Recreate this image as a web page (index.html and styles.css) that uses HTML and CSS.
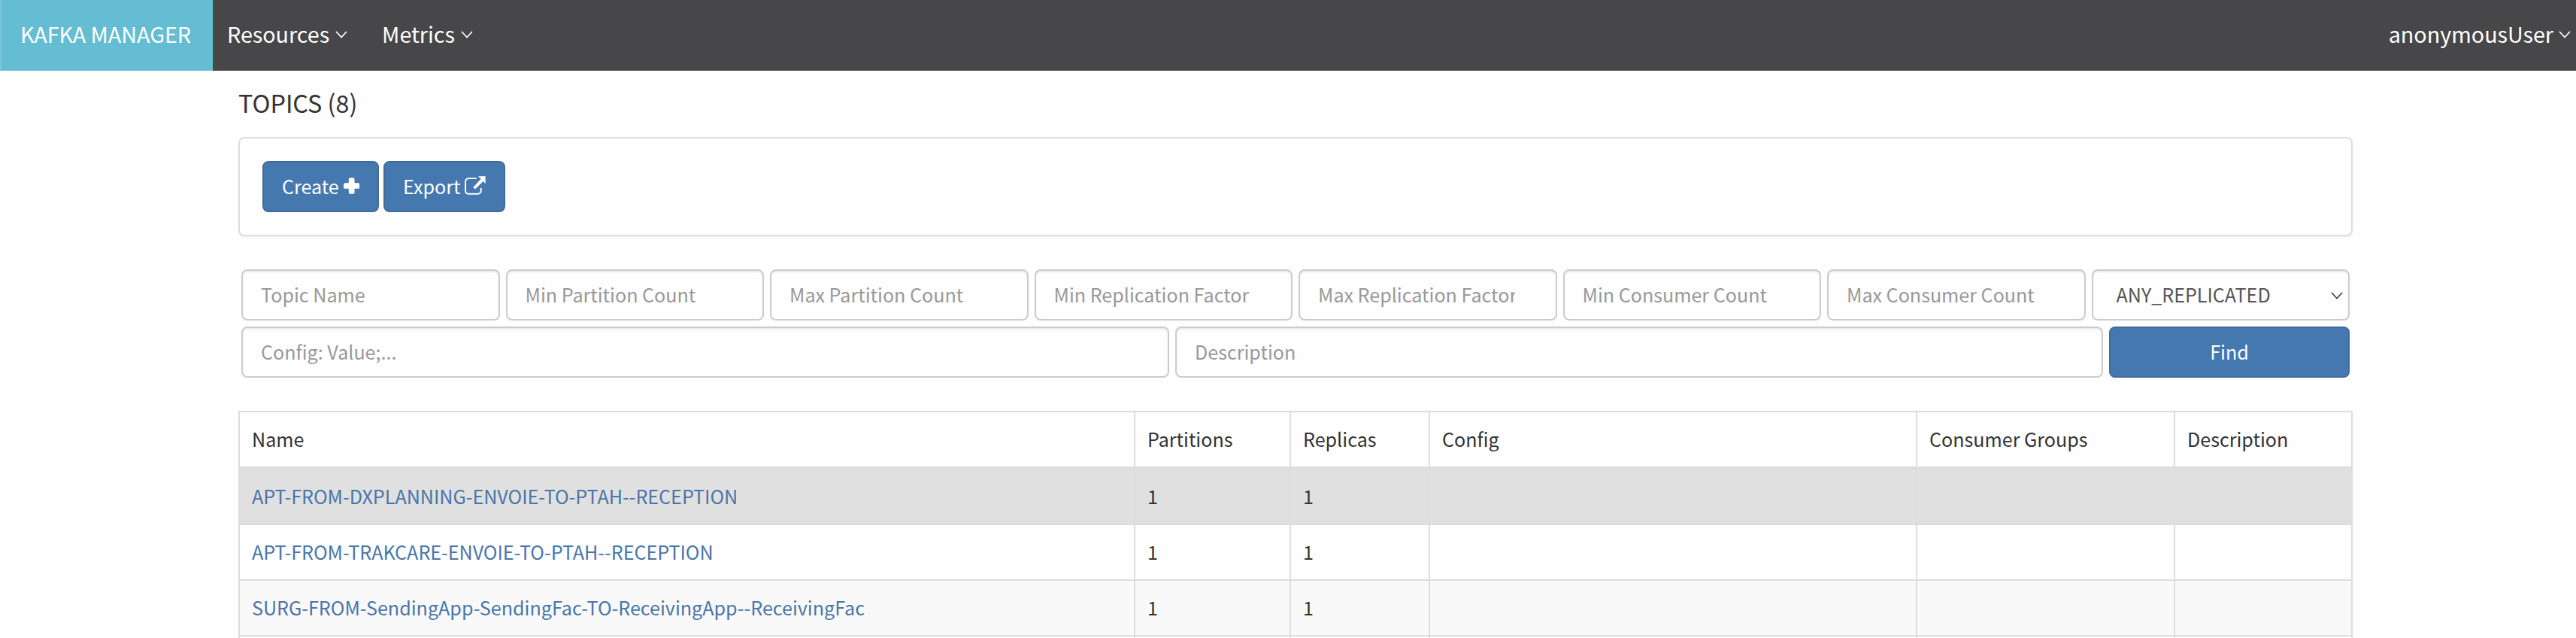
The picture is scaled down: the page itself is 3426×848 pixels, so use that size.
FILE: index.html
```html
<!DOCTYPE html>
<html lang="en">
<head>
<meta charset="utf-8">
<title>Kafka Manager</title>
<link rel="stylesheet" href="styles.css">
</head>
<body>
<header class="navbar">
  <a class="brand"><span>KAFKA MANAGER</span></a>
  <nav class="menu">
    <a class="menu-item"><span>Resources</span><svg class="caret" viewBox="0 0 16 10"><path d="M1 1l7 7.5L15 1"/></svg></a>
    <a class="menu-item"><span>Metrics</span><svg class="caret" viewBox="0 0 16 10"><path d="M1 1l7 7.5L15 1"/></svg></a>
  </nav>
  <a class="menu-item user"><span>anonymousUser</span><svg class="caret" viewBox="0 0 16 10"><path d="M1 1l7 7.5L15 1"/></svg></a>
</header>
<main class="content">
  <h1 class="title"><span>TOPICS (8)</span></h1>
  <section class="panel">
    <button class="btn create"><span>Create</span><svg class="plus" viewBox="0 0 22 22"><path d="M9 0h4q2 0 2 2v5h5q2 0 2 2v4q0 2-2 2h-5v5q0 2-2 2H9q-2 0-2-2v-5H2q-2 0-2-2V9q0-2 2-2h5V2q0-2 2-2z"/></svg></button>
    <button class="btn export"><span>Export</span><svg class="share" viewBox="0 0 28 25"><path class="share-box" d="M16 3H6Q1 3 1 8v11q0 5 5 5h11q5 0 5-5v-3"/><path class="share-arrow" d="M18 0h10v10l-3-3-11 10.500-2.500-2.500L22 3.500z"/></svg></button>
  </section>
  <form class="filters">
    <div class="filter-row counts">
      <input class="field" placeholder="Topic Name">
      <input class="field" placeholder="Min Partition Count">
      <input class="field" placeholder="Max Partition Count">
      <input class="field" placeholder="Min Replication Factor">
      <input class="field" placeholder="Max Replication Factor">
      <input class="field" placeholder="Min Consumer Count">
      <input class="field" placeholder="Max Consumer Count">
      <div class="select-wrap">
        <select class="field select"><option>ANY_REPLICATED</option></select>
        <svg class="caret select-caret" viewBox="0 0 16 10"><path d="M1 1l7 7.5L15 1"/></svg>
      </div>
    </div>
    <div class="filter-row details">
      <input class="field" placeholder="Config: Value;...">
      <input class="field" placeholder="Description">
      <button class="btn find" type="button"><span>Find</span></button>
    </div>
  </form>
  <table class="topics">
    <colgroup><col class="c-name"><col class="c-part"><col class="c-repl"><col class="c-conf"><col class="c-group"><col class="c-desc"></colgroup>
    <thead><tr><th>Name</th><th>Partitions</th><th>Replicas</th><th>Config</th><th>Consumer Groups</th><th>Description</th></tr></thead>
    <tbody>
      <tr class="hovered"><td><a>APT-FROM-DXPLANNING-ENVOIE-TO-PTAH--RECEPTION</a></td><td>1</td><td>1</td><td></td><td></td><td></td></tr>
      <tr><td><a>APT-FROM-TRAKCARE-ENVOIE-TO-PTAH--RECEPTION</a></td><td>1</td><td>1</td><td></td><td></td><td></td></tr>
      <tr class="striped"><td><a>SURG-FROM-SendingApp-SendingFac-TO-ReceivingApp--ReceivingFac</a></td><td>1</td><td>1</td><td></td><td></td><td></td></tr>
      <tr class="cut"><td></td><td></td><td></td><td></td><td></td><td></td></tr>
    </tbody>
  </table>
</main>
</body>
</html>
```
FILE: styles.css
```css
* { box-sizing: border-box; }
body {
  margin: 0;
  height: 848px;
  overflow: hidden;
  background: #fefefe;
  color: #333;
  font: 25.1px/36px "Noto Sans CJK SC", sans-serif;
}
.navbar {
  display: flex;
  height: 94px;
  background: #474749;
  color: #fff;
  font-size: 28.7px;
}
.brand {
  display: flex;
  align-items: center;
  width: 283px;
  padding: 0 0 5px 25px;
  border-left: 2px solid #7ac6d8;
  background: #64bdd3;
}
.menu { display: flex; gap: 46px; padding-left: 19px; }
.menu-item { display: flex; align-items: center; gap: 8px; padding-bottom: 5px; }
.user { gap: 7px; margin-left: auto; padding-right: 7px; }
.caret { width: 16px; height: 10px; fill: none; stroke: currentColor; stroke-width: 1.7; }
.menu-item .caret { margin-top: 2px; }
.content { width: 2812px; margin-left: 317px; }
.title { margin: 0; padding-top: 18px; height: 88px; font-weight: 400; font-size: 32.3px; line-height: 48px; }
.panel {
  display: flex;
  gap: 6px;
  height: 132px;
  padding: 30px;
  border: 2px solid #ddd;
  border-radius: 8px;
  box-shadow: 0 2px 2px rgba(0, 0, 0, .05);
}
.btn {
  display: flex;
  align-items: center;
  height: 68px;
  padding: 0 24px 2px;
  border: 2px solid #416b9c;
  border-radius: 8px;
  background: #4678b0;
  color: #fff;
  font: inherit;
}
.create { width: 155px; }
.export { width: 162px; }
.plus { width: 22px; height: 22px; margin-left: 6px; fill: #fff; }
.share { width: 28px; height: 25px; margin-left: 6px; margin-bottom: 2px; }
.share-box { fill: none; stroke: #fff; stroke-width: 2; }
.share-arrow { fill: #fff; }
.filters { display: grid; gap: 8px; padding: 44px 4px; }
.filter-row { display: grid; gap: 8px; }
.counts { grid-template-columns: repeat(8, 1fr); }
.details { grid-template-columns: 1fr 1fr 320px; }
.field {
  width: 100%;
  min-width: 0;
  height: 68px;
  padding: 0 54px 2px 24px;
  border: 2px solid #ccc;
  border-radius: 8px;
  background: #fefefe;
  box-shadow: inset 0 2px 2px rgba(0, 0, 0, .075);
  color: #555;
  font: inherit;
}
.field::placeholder { color: #999; opacity: 1; }
.select-wrap { position: relative; }
.select { appearance: none; padding-left: 31px; }
.select-caret { position: absolute; right: 9px; top: 30px; color: #444; }
.find { justify-content: center; }
.topics { width: 2812px; table-layout: fixed; border-spacing: 0; border-top: 2px solid #ddd; border-right: 2px solid #ddd; }
.c-name { width: 1191px; }
.c-part { width: 207px; }
.c-repl { width: 185px; }
.c-conf { width: 648px; }
.c-group { width: 343px; }
.topics th, .topics td {
  height: 74px;
  padding: 0 16px 2px;
  border-left: 2px solid #ddd;
  border-bottom: 2px solid #ddd;
  text-align: left;
  font-weight: 400;
}
.topics th { height: 76px; border-bottom-width: 4px; }
.topics .cut td { height: 2px; padding: 0; border-bottom: 0; }
.topics a { color: #4876a9; }
.hovered { background: #e0e0e0; }
.striped { background: #f9f9f9; }
```
